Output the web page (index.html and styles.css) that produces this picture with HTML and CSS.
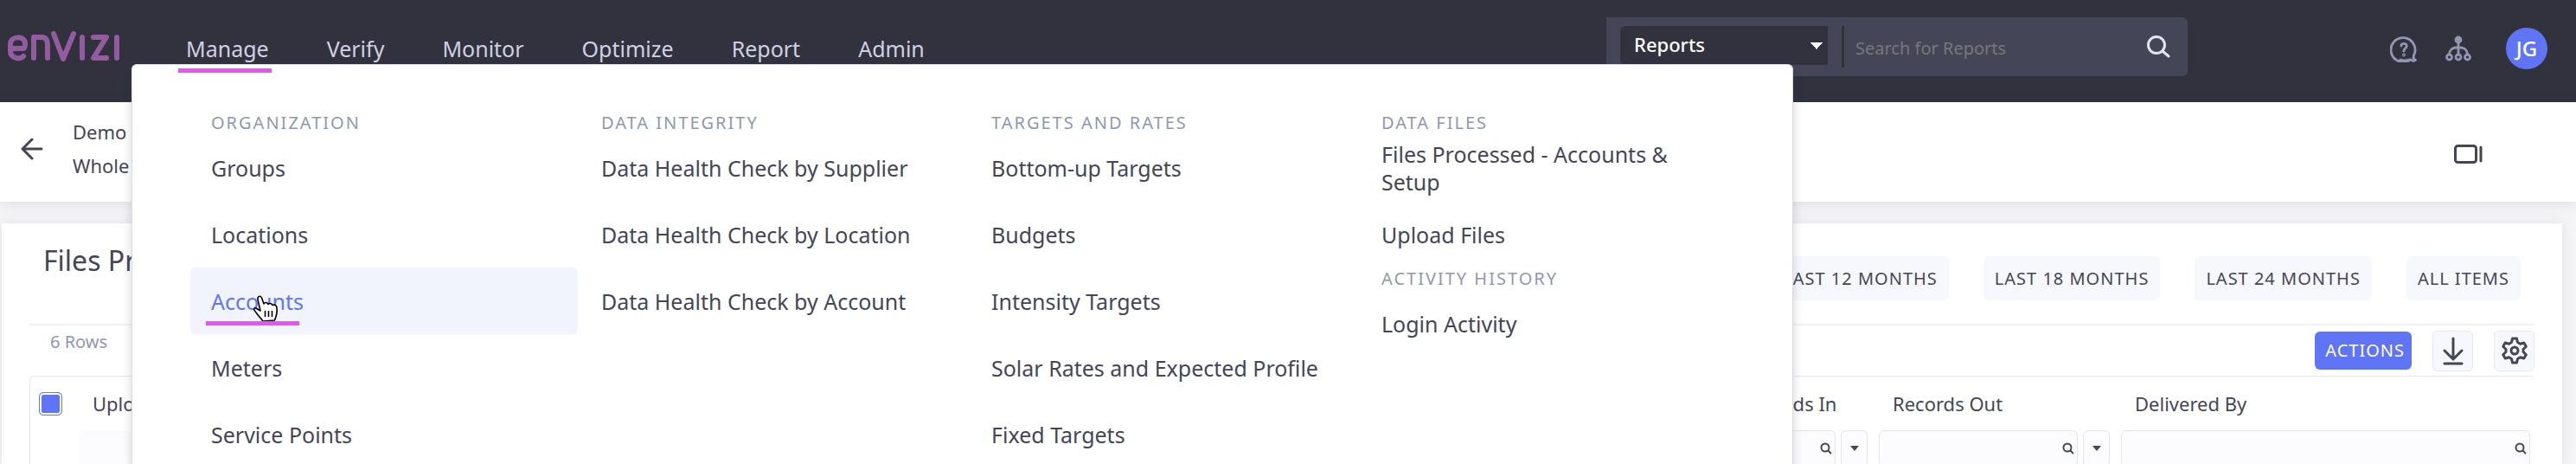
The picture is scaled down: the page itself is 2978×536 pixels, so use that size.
FILE: index.html
```html
<!DOCTYPE html>
<html lang="en">
<head>
<meta charset="utf-8">
<title>Envizi</title>
<link rel="stylesheet" href="styles.css">
</head>
<body>
<header class="topbar">
  <a class="brand" href="#" aria-label="Envizi">
    <svg class="brand-mark" viewBox="0 0 132 42" fill="none" stroke="currentColor" stroke-width="6" stroke-linecap="round" stroke-linejoin="round">
      <path d="M5 21H19C21 21 21 17 21 15C21 6 4 6 4 16V24C4 33 16 34 19 30"/>
      <path d="M31 32V8H40C47 8 47 14 47 18V32"/>
      <path d="M54 4L65 33L77 4"/>
      <path d="M87 8V32"/>
      <path d="M100 8H115L100 32H115"/>
      <path d="M127 8V32"/>
    </svg>
  </a>
  <nav class="nav">
    <a class="nav-link" href="#">Manage</a>
    <a class="nav-link" href="#">Verify</a>
    <a class="nav-link" href="#">Monitor</a>
    <a class="nav-link" href="#">Optimize</a>
    <a class="nav-link" href="#">Report</a>
    <a class="nav-link" href="#">Admin</a>
  </nav>
  <form class="search">
    <select class="scope" aria-label="Search in"><option>Reports</option></select>
    <input class="query" type="text" placeholder="Search for Reports" aria-label="Search for Reports">
    <button class="icon-btn" type="button" aria-label="Search">
      <svg width="28" height="28" viewBox="0 0 28 28" fill="none" stroke="#e4e5f1" stroke-width="3" stroke-linecap="round"><circle cx="12" cy="12" r="9.500"/><path d="M19 19L26 25"/></svg>
    </button>
  </form>
  <div class="tools">
    <button class="icon-btn" type="button" aria-label="Help">
      <svg width="32" height="32" viewBox="0 0 32 32" fill="none" stroke="#9197b0" stroke-width="2.800" stroke-linecap="round" stroke-linejoin="round"><path d="M23.500 28.800A14 14 0 1 1 27.500 24L27 27L29.500 29.500L27 30.500L23.500 28.800Q16 31 12 29"/><path d="M12.800 13.200C13 9.500 19.200 9.500 19.200 13.200C19.200 16 16 15.500 16 19"/><circle cx="16" cy="23.500" r=".6"/></svg>
    </button>
    <button class="icon-btn" type="button" aria-label="Hierarchy">
      <svg width="30" height="30" viewBox="0 0 30 30" fill="none" stroke="#9197b0" stroke-width="2.800"><circle cx="15" cy="5" r="3" fill="#9197b0"/><path d="M15 7V22M4.500 22C4.500 17 8 14 12 14H18C22 14 25.500 17 25.500 22"/><circle cx="4.500" cy="25" r="3"/><circle cx="15" cy="25" r="3"/><circle cx="25.500" cy="25" r="3"/></svg>
    </button>
    <button class="avatar" type="button">JG</button>
  </div>
</header>

<section class="crumbs">
  <button class="icon-btn" type="button" aria-label="Back">
    <svg width="26" height="26" viewBox="0 0 26 26" fill="none" stroke="#444658" stroke-width="3" stroke-linecap="round" stroke-linejoin="round"><path d="M24 13H2M13 2L2 13L13 24"/></svg>
  </button>
  <div class="crumb-text"><span>Demo</span><span>Whole</span></div>
  <button class="icon-btn panel-toggle" type="button" aria-label="Toggle panel">
    <svg width="33" height="22" viewBox="0 0 33 22" fill="none" stroke="#444658" stroke-width="3" stroke-linecap="round"><rect x="1.500" y="1.500" width="24" height="19" rx="3"/><path d="M31 3V19"/></svg>
  </button>
</section>

<main class="page">
  <div class="card">
    <div class="card-head">
      <h1 class="title">Files Processed</h1>
      <div class="ranges">
        <button class="range" type="button">LAST 12 MONTHS</button>
        <button class="range" type="button">LAST 18 MONTHS</button>
        <button class="range" type="button">LAST 24 MONTHS</button>
        <button class="range" type="button">ALL ITEMS</button>
      </div>
    </div>
    <div class="toolbar">
      <span class="count">6 Rows</span>
      <button class="actions" type="button">ACTIONS</button>
      <button class="square" type="button" aria-label="Download">
        <svg width="24" height="34" viewBox="0 0 24 34" fill="none" stroke="#444658" stroke-width="3" stroke-linecap="round" stroke-linejoin="round"><path d="M12 3V27M2 17L12 27L22 17M2 32H22"/></svg>
      </button>
      <button class="square" type="button" aria-label="Settings">
        <svg width="30" height="32" viewBox="0 0 30 32" fill="none" stroke="#444658" stroke-width="3" stroke-linejoin="round"><path d="M12.500 2H17.500L18.500 6.500L21.500 8.200L25.800 7L28.300 11.200L25 14.500V17.500L28.300 20.800L25.800 25L21.500 23.800L18.500 25.500L17.500 30H12.500L11.500 25.500L8.500 23.800L4.200 25L1.700 20.800L5 17.500V14.500L1.700 11.200L4.200 7L8.500 8.200L11.500 6.500Z"/><circle cx="15" cy="16" r="4"/></svg>
      </button>
    </div>
    <table class="grid">
      <colgroup><col class="c-check"><col class="c-file"><col class="c-in"><col class="c-out"><col class="c-by"></colgroup>
      <thead>
        <tr>
          <th><input class="check" type="checkbox" checked aria-label="Select all rows"></th>
          <th>Upload</th>
          <th>Records In</th>
          <th>Records Out</th>
          <th>Delivered By</th>
        </tr>
      </thead>
      <tbody>
        <tr>
          <td></td>
          <td><div class="filter"><div class="filter-box plain"><input class="filter-input" type="text" aria-label="Filter Upload"></div></div></td>
          <td><div class="filter"><div class="filter-box"><input class="filter-input" type="text" aria-label="Filter Records In"><svg class="lens" viewBox="0 0 14 14"><circle cx="6" cy="6" r="4.500"/><path d="M9.500 9.500L13 13"/></svg></div><button class="drop" type="button" aria-label="Records In options"></button></div></td>
          <td><div class="filter"><div class="filter-box"><input class="filter-input" type="text" aria-label="Filter Records Out"><svg class="lens" viewBox="0 0 14 14"><circle cx="6" cy="6" r="4.500"/><path d="M9.500 9.500L13 13"/></svg></div><button class="drop" type="button" aria-label="Records Out options"></button></div></td>
          <td><div class="filter last"><div class="filter-box"><input class="filter-input" type="text" aria-label="Filter Delivered By"><svg class="lens" viewBox="0 0 14 14"><circle cx="6" cy="6" r="4.500"/><path d="M9.500 9.500L13 13"/></svg></div></div></td>
        </tr>
      </tbody>
    </table>
  </div>
</main>

<div class="menu">
  <span class="menu-marker"></span>
  <section class="menu-col">
    <h2>ORGANIZATION</h2>
    <a href="#">Groups</a>
    <a href="#">Locations</a>
    <a class="current" href="#">Accounts
      <svg class="pointer" viewBox="0 0 32 34" fill="#fff" stroke="#000" stroke-width="1.600" stroke-linejoin="round"><path d="M13 31C10 27 7 24 5 21C2 18 2 15 5 16L10 19L7 6C6.500 2 10 1 11.500 4L14 11C15 9 18 9 19 11.500C20 10 23 10 24 12.500C26 11.500 29 12.500 29 15.500C30 22 28 26 26.500 30Z"/><path d="M15.500 19V26M19.500 19V26M23.500 19V26"/></svg>
    </a>
    <a href="#">Meters</a>
    <a href="#">Service Points</a>
  </section>
  <section class="menu-col">
    <h2>DATA INTEGRITY</h2>
    <a href="#">Data Health Check by Supplier</a>
    <a href="#">Data Health Check by Location</a>
    <a href="#">Data Health Check by Account</a>
  </section>
  <section class="menu-col">
    <h2>TARGETS AND RATES</h2>
    <a href="#">Bottom-up Targets</a>
    <a href="#">Budgets</a>
    <a href="#">Intensity Targets</a>
    <a href="#">Solar Rates and Expected Profile</a>
    <a href="#">Fixed Targets</a>
  </section>
  <section class="menu-col">
    <h2>DATA FILES</h2>
    <a href="#">Files Processed - Accounts &amp; Setup</a>
    <a href="#">Upload Files</a>
    <h2>ACTIVITY HISTORY</h2>
    <a href="#">Login Activity</a>
  </section>
</div>
</body>
</html>
```
FILE: styles.css
```css
* { box-sizing: border-box; }
body {
  display: flex;
  flex-direction: column;
  margin: 0;
  height: 100vh;
  overflow: hidden;
  position: relative;
  background: #f5f5f8;
  color: #444658;
  font: 24px/32px "Noto Sans", "Open Sans", sans-serif;
}
button, input, select { font: inherit; color: inherit; margin: 0; }
button { border: 0; padding: 0; background: none; }
svg { display: block; }
a { color: inherit; text-decoration: none; }
.icon-btn { display: flex; flex: none; }

.topbar {
  display: flex;
  flex: none;
  align-items: center;
  height: 118px;
  padding-bottom: 6px;
  background: #31323e;
}
.brand { margin-left: 8px; color: #935ca0; }
.brand-mark { width: 132px; height: 42px; }
.nav { display: flex; gap: 67px; margin-left: 75px; color: #cfd1e2; }
.nav-link { font-size: 25px; }
.search {
  display: flex;
  align-items: flex-start;
  width: 672px;
  height: 68px;
  margin-left: auto;
  margin-bottom: 4px;
  padding: 10px 20px 10px 16px;
  border-radius: 0 6px 6px 0;
  background: #444658;
}
.scope {
  appearance: none;
  width: 240px;
  height: 45px;
  padding: 0 16px 4px;
  border: 0;
  border-radius: 6px 0 0 6px;
  color: #fff;
  font-size: 22px;
  font-weight: 500;
  background: linear-gradient(to bottom right, #fff 50%, transparent 51%) 227px 19px / 7px 8px no-repeat,
              linear-gradient(to bottom left, #fff 50%, transparent 51%) 220px 19px / 7px 8px no-repeat, #31323e;
}
.query {
  flex: 1;
  min-width: 0;
  height: 48px;
  margin-left: 16px;
  padding: 2px 13px 0;
  border: 0;
  border-left: 3px solid #31323e;
  background: none;
  font-size: 20px;
}
.query::placeholder { color: #777; }
.search .icon-btn { margin-top: 10px; }
.tools { display: flex; align-items: center; gap: 32px; margin: 0 33px 0 234px; }
.avatar {
  width: 48px;
  height: 48px;
  margin-left: 8px;
  border-radius: 50%;
  background: #6075f5;
  color: #fff;
  font-weight: 500;
}

.crumbs {
  display: flex;
  flex: none;
  align-items: center;
  height: 115px;
  padding: 0 108px 8px 24px;
  background: #fff;
  box-shadow: 0 2px 16px rgba(49, 50, 62, .12);
}
.crumb-text { display: flex; flex-direction: column; gap: 7px; margin-left: 34px; font-size: 22px; }
.panel-toggle { margin: 12px 0 0 auto; }

.page { display: flex; flex: 1; min-height: 0; padding: 25px 16px 0 2px; }
.card { flex: 1; min-width: 0; overflow: hidden; padding: 38px 32px 0; background: #fff; box-shadow: 0 0 16px rgba(49, 50, 62, .1); }
.card-head { display: flex; height: 80px; padding: 0 16px; border-bottom: 2px solid #f1f1f5; }
.ranges { display: flex; gap: 40px; margin-left: auto; }
.title { margin: -15px 0 0; font-size: 32px; font-weight: 400; line-height: 40px; }
.range { height: 51px; padding: 0 13px; border-radius: 6px; background: #f7f8fe; font-size: 20px; letter-spacing: 1px; }
.toolbar { display: flex; align-items: center; height: 58px; gap: 24px; }
.count { margin: -20px auto 0 24px; color: #9197b0; font-size: 20px; }
.actions { height: 44px; padding: 0 8px 0 12px; border-radius: 6px; background: #6075f5; color: #fff; font-size: 20px; letter-spacing: 1px; }
.square {
  display: flex;
  align-items: center;
  justify-content: center;
  width: 47px;
  height: 47px;
  border: 1px solid #e6e7ef;
  border-radius: 6px;
  background: #f7f8fe;
}

.grid { width: 100%; table-layout: fixed; border-collapse: separate; border-spacing: 0; border: 1px solid #e2e4f0; border-right: 0; border-radius: 6px; }
.c-check { width: 56px; }
.c-in { width: 174px; }
.c-out { width: 280px; }
.c-by { width: 478px; }
th { height: 62px; padding: 0 16px; text-align: left; font-size: 22px; font-weight: 400; }
td { padding: 0; }
.check {
  appearance: none;
  display: block;
  width: 27px;
  height: 27px;
  border: 1px solid #6075f5;
  border-radius: 5px;
  background: #6075f5;
  box-shadow: inset 0 0 0 2px #fff;
}
th:first-child { padding: 0 10px; }
.filter { display: flex; gap: 6px; padding-right: 13px; }
.last { padding-right: 5px; }
.filter-box { display: flex; flex: 1; min-width: 0; align-items: center; height: 42px; padding-right: 3px; border: 1px solid #e2e4f0; border-radius: 6px; background: #fcfcfe; }
.plain { border-color: #fcfcfe; }
.filter-input { flex: 1; min-width: 0; height: 36px; border: 0; background: none; }
.lens { flex: none; width: 14px; height: 14px; fill: none; stroke: #444658; stroke-width: 2; }
.drop { flex: none; width: 31px; height: 42px; border: 1px solid #e2e4f0; border-radius: 6px; background: #fcfcfe; }
.drop::after { content: ""; display: block; width: 0; margin: auto; border: 5px solid transparent; border-top: 6px solid #444658; border-bottom: 0; }

.menu {
  position: absolute;
  top: 74px;
  bottom: 0;
  left: 152px;
  width: 1921px;
  display: grid;
  grid-template-columns: repeat(4, 1fr);
  gap: 3px;
  padding: 54px 51px 0 67px;
  border: 1px solid #d8dae6;
  border-bottom: 0;
  border-radius: 6px 6px 0 0;
  background: #fff;
  box-shadow: 0 8px 12px rgba(49, 50, 62, .2);
}
.menu-marker { position: absolute; top: 4px; left: 53px; width: 108px; height: 5px; background: #ed4ff8; }
.menu-col h2 { margin: 0; padding-left: 24px; color: #9197b0; font-size: 20px; font-weight: 400; line-height: 26px; letter-spacing: 2px; }
.menu-col a { position: relative; display: flex; align-items: center; height: 77px; padding: 0 24px; border-radius: 6px; font-size: 25px; }
.menu-col .current { background: #f1f3fd; color: #6075f5; }
.current::after { content: ""; position: absolute; z-index: 1; left: 18px; bottom: 10px; width: 108px; height: 5px; background: #ed4ff8; }
.pointer { position: absolute; left: 71px; top: 31px; width: 32px; height: 34px; }
```
